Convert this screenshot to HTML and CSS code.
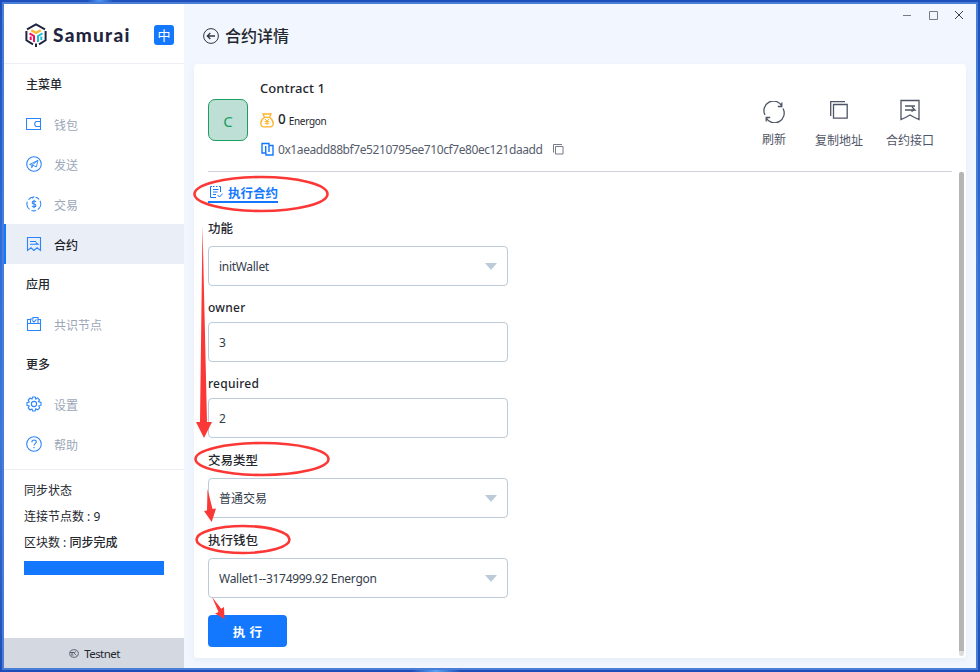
FILE: index.html
```
<!DOCTYPE html>
<html lang="zh-CN">
<head>
<meta charset="utf-8">
<title>Samurai</title>
<link rel="stylesheet" href="styles.css">
</head>
<body>
<div class="window">
  <aside class="sidebar">
    <header class="brand">
      <svg class="brand-mark" width="22" height="24" viewBox="0 0 22 24" fill="none">
        <path d="M2 6.300 11 1.400l9 4.900M1.400 8v9.300l6.600 4M20.600 8v9.300L14 21.300M11 20.500v3.500" stroke="#1f2540" stroke-width="2"/>
        <path d="M6.200 7.200 11 9.800l4.800-2.600" stroke="#fdb833" stroke-width="2.400"/>
        <path d="M4.500 10.300 9 13v6M5.700 13.500V17" stroke="#ee1164" stroke-width="2"/>
        <path d="M17.500 10.300 13 13v6M16.300 13.500V17" stroke="#1cc3d8" stroke-width="2"/>
      </svg>
      <span class="brand-name">Samurai</span>
      <span class="lang">中</span>
    </header>
    <nav class="menu">
      <h2>主菜单</h2>
      <a><svg class="ico" viewBox="0 0 16 16"><path d="M.5 2.500h14v11H.5zM14.500 5.500H10L8.800 7v2L10 10.500h4.500"/></svg>钱包</a>
      <a><svg class="ico" viewBox="0 0 16 16"><circle cx="8" cy="8" r="7.300"/><path d="M3.500 8.500 12 4.300 10.300 11 7.300 9.400zM12 4.300 5.700 9.500v2.300l1.600-2.400" stroke-width=".9"/></svg>发送</a>
      <a><svg class="ico" viewBox="0 0 16 16"><path d="M9.500 1.300a7 7 0 0 1 3.700 2.100M14 4.700a7 7 0 0 1-2.100 8.800M10 14.500a7 7 0 0 1-4.500-.1M3.500 13.300A7 7 0 0 1 1.300 5.700M2.500 3.600A7 7 0 0 1 7.500 1l-1.200 1.400"/><path d="M10 6Q9.500 5 8 5 6.200 5 6.200 6.400T8 8t1.900 1.500T8 11Q6.400 11 6 9.900M8 3.700v8.600"/></svg>交易</a>
      <a class="active"><svg class="ico" viewBox="0 0 16 16"><path d="M1.500 1.500h13v13L11 11.800 8 14.500l-3-2.700-3.500 2.700zM4 5.500h6M4 8.300h8L9.700 6.500"/></svg>合约</a>
      <h2>应用</h2>
      <a><svg class="ico" viewBox="0 0 16 16"><path d="M4 3.500H1.500v11h13v-11H12M1.500 7.500h13M4.500 7V3H7V1.500h5V7M6.300 4.500 8 6l2.500-2.700"/></svg>共识节点</a>
      <h2>更多</h2>
      <a><svg class="ico" viewBox="0 0 16 16"><path d="M6.700 1h2.600l.5 2 1.700-1.100 2 1.900-1 1.800 2.500.8v2.800l-2.300.8 1 1.800-2 2-2-1-.6 2.200H6.700L6 13l-1.900 1-1.900-2 1-1.900L1 9.300V6.600L3.200 6l-1-2 1.900-2L6 3z"/><circle cx="8" cy="8" r="2.600"/></svg>设置</a>
      <a><svg class="ico" viewBox="0 0 16 16"><circle cx="8" cy="8" r="7.300"/><path d="M5.800 6.200C5.900 3.300 10.300 3.400 10.300 6 10.300 7.600 8 7.700 8 9.500M8 11v1.300"/></svg>帮助</a>
    </nav>
    <section class="sync">
      <p>同步状态</p>
      <p>连接节点数 : 9</p>
      <p>区块数 : <b>同步完成</b></p>
      <div class="progress"></div>
    </section>
    <footer class="network">
      <svg width="10" height="9" viewBox="0 0 10 9" fill="none" stroke="#444a58" stroke-width=".8"><ellipse cx="5" cy="4.500" rx="4.300" ry="3.800"/><path d="M1 3.500h3.500M3 5.500v-2h2.500l1.500-1M5 4l2.500 2.500M2 6h2.500"/></svg>
      <span>Testnet</span>
    </footer>
  </aside>
  <main class="main">
    <div class="controls">
      <svg width="62" height="12" viewBox="0 0 62 12" fill="none" stroke="#777b83"><path d="M0 6.500h8M26.500 2.500h8v8h-8z"/><path d="m52 2 8 8m0-8-8 8" stroke="#3c3f46"/></svg>
    </div>
    <header class="title">
      <svg width="16" height="16" viewBox="0 0 16 16" fill="none" stroke="#33363d"><circle cx="8" cy="8" r="7.400"/><path d="M12 8H4.500M7.300 5 4.300 8l3 3" stroke-width="1.300"/></svg>
      <h1>合约详情</h1>
    </header>
    <section class="card">
      <div class="contract">
        <div class="avatar">C</div>
        <div class="info">
          <div class="name">Contract 1</div>
          <div class="balance">
            <svg width="14" height="15" viewBox="0 0 14 15" fill="none" stroke="#fdb32b" stroke-width="1.300"><path d="M3 1h8L9.500 4.300h-5zM4.500 4.300C-.5 8-.3 13.800 4 13.800h6c4.300 0 4.500-5.800-.5-9.500"/><path d="M5 6l2 2 2-2M4.700 8.500h4.600M4.700 10.300h4.600M7 8v4" stroke-width="1"/></svg>
            <b>0</b><small>Energon</small>
          </div>
          <div class="address">
            <svg width="13" height="14" viewBox="0 0 13 14" fill="none" stroke="#1478ff" stroke-width="1.400"><path d="M4.500 11H1V1.500h7V10M5 11v2h7V3.500H8M4.700 4v7"/></svg>
            <span>0x1aeadd88bf7e5210795ee710cf7e80ec121daadd</span>
            <svg class="copy" width="11" height="11" viewBox="0 0 11 11" fill="none" stroke="#777b88"><path d="M2.500 2.500h7.500V10H2.500zM.5 8.500v-8h8.500"/></svg>
          </div>
        </div>
        <div class="actions">
          <a class="refresh"><svg width="22" height="22" viewBox="0 0 22 22"><path d="M19 5.200A9.500 9.500 0 0 0 2 14M3 16.800A9.500 9.500 0 0 0 20 7.500M18.800 1.500v4h-4M3.200 20.500v-4h4"/></svg>刷新</a>
          <a class="copy-address"><svg width="22" height="22" viewBox="0 0 22 22"><path d="M5.500 5.500h13.700v13.700H5.500zM2.700 17V2.700H17"/></svg>复制地址</a>
          <a class="interface"><svg width="22" height="22" viewBox="0 0 22 22"><path d="M2 1.500h18v19l-4.500-2-4.500-2.500-4.500 2.500-4.500 2zM6 7h10M6 11h10l-3-3M12.500 12.500l2.800-1.500"/></svg>合约接口</a>
        </div>
      </div>
      <div class="tabs">
        <a class="tab"><svg width="14" height="14" viewBox="0 0 14 14" fill="none" stroke="#1478ff"><path d="M3 1.500H1.500v11H7M10 1.500h1.500V7M4 1.500h1.500M7 1.500h1.500M4 4.500h5.500M4 7h4.500M4 9.500h3M8.500 10l2 2 3.300-3.500"/></svg><span>执行合约</span></a>
      </div>
      <form class="form">
        <label class="first">功能</label>
        <div class="field select"><span class="init">initWallet</span></div>
        <label class="latin">owner</label>
        <div class="field">3</div>
        <label class="latin">required</label>
        <div class="field">2</div>
        <label>交易类型</label>
        <div class="field select">普通交易</div>
        <label>执行钱包</label>
        <div class="field select"><span class="wallet">Wallet1--3174999.92 Energon</span></div>
        <button type="button">执 行</button>
      </form>
      <div class="scrollbar"></div>
    </section>
  </main>
</div>
<svg class="marks" width="980" height="672" viewBox="0 0 980 672">
  <g fill="none" stroke="#fc3837" stroke-width="2.600">
    <ellipse cx="261" cy="194" rx="66.500" ry="17"/>
    <ellipse cx="262" cy="459" rx="66.500" ry="16"/>
    <ellipse cx="243" cy="539.500" rx="46.500" ry="13.500"/>
  </g>
  <g fill="#fc3837">
    <path d="M202.500 226 L200 422h-4l8 16 8-16h-5z"/>
    <path d="M207.500 489 207 510.500l-3 .5 7.700 11L216 508.500l-3.500.5z"/>
    <path d="M212 597l6.500 15-3.500 1.500 9.500 5.500-.5-12-2.800 1.800z"/>
  </g>
</svg>
</body>
</html>
```

FILE: styles.css
```
* { box-sizing: border-box; }
body {
  margin: 0;
  width: 980px;
  height: 672px;
  padding: 4px;
  overflow: hidden;
  background:
    linear-gradient(100deg, transparent 86px, #4d94f0 98px, transparent 112px) no-repeat 0 0 / 980px 4px,
    linear-gradient(100deg, transparent 405px, #58a5f5 430px, transparent 455px) no-repeat 0 668px / 980px 4px,
    linear-gradient(#1d50bd, #2f6fdc 40%, #3b77dc 65%, #1c4db8);
  font-family: "Noto Sans", "Noto Sans CJK SC", sans-serif;
  font-size: 12px;
  color: #24272e;
}
h1, h2, p { margin: 0; }
svg { display: block; flex: none; }
.window { display: flex; height: 664px; background: #f2f6fe; box-shadow: 0 0 0 2px #4a7dd6; }

.sidebar { display: flex; flex-direction: column; width: 180px; background: #fff; }
.brand { display: flex; align-items: center; height: 60px; padding: 2px 10px 0 21px; border-bottom: 1px solid #ebeef4; }
.brand-name { margin-left: 6px; font: 900 19px/24px "Lato", sans-serif; letter-spacing: 1.3px; color: #1f2540; }
.lang { width: 20px; height: 20px; margin-left: auto; border-radius: 3px; background: #1478ff; color: #fff; font-size: 13px; line-height: 20px; text-align: center; }
.menu { height: 406px; border-bottom: 1px solid #ebeef4; }
.menu h2 { height: 40px; padding-left: 22px; font-size: 12px; font-weight: 500; line-height: 42px; }
.menu a { display: flex; align-items: center; gap: 12px; height: 40px; padding: 1px 0 0 22px; color: #9ba7b9; }
.menu .active { border-left: 2px solid #1478ff; padding-left: 20px; background: #eaeff7; color: #1d2027; font-weight: 500; }
.ico { width: 16px; height: 16px; margin-top: -1px; fill: none; stroke: #2b84ff; stroke-width: 1.100; }
.sync { padding: 8px 20px 0; line-height: 26px; }
.sync b { font-weight: 500; }
.progress { height: 14px; margin-top: 5px; background: #1478ff; }
.network { display: flex; align-items: center; justify-content: center; gap: 5px; height: 30px; margin-top: auto; padding-left: 1px; background: #d4d8e1; }
.network span { font-size: 11.500px; letter-spacing: -.55px; }

.main { flex: 1; display: flex; flex-direction: column; padding: 0 10px 10px; }
.controls { display: flex; justify-content: flex-end; height: 14px; padding: 5px 1px 0 0; }
.title { display: flex; align-items: center; gap: 6px; height: 46px; padding: 0 0 10px 9px; }
.title h1 { font-size: 16px; font-weight: 500; line-height: 24px; }
.card { position: relative; flex: 1; padding: 0 14px; border-radius: 4px; background: #fff; box-shadow: 0 3px 6px #e6edf8; }
.contract { display: flex; height: 108px; border-bottom: 1px solid #cfd1dc; }
.avatar { width: 40px; height: 42px; margin-top: 35px; border: 1px solid #18a05e; border-radius: 7px; background: #bedfd6; color: #18a05e; font-size: 15px; line-height: 43px; text-align: center; }
.info { padding: 14px 0 0 12px; }
.name { font-size: 13px; font-weight: 500; line-height: 20px; letter-spacing: .08px; }
.balance { display: flex; align-items: center; height: 22px; margin-top: 11px; }
.balance b { margin: -2px 3px 0 4px; font-size: 13.500px; font-weight: 500; }
.balance small { padding-top: 2px; font-size: 10px; letter-spacing: -.3px; }
.address { display: flex; align-items: center; height: 20px; margin-top: 8px; padding-left: 1px; color: #575d6d; }
.address span { margin-left: 4px; letter-spacing: -.42px; }
.copy { margin-left: 11px; }
.actions { display: flex; align-items: flex-start; margin-left: auto; padding-right: 18px; color: #4f5566; line-height: 18px; }
.actions a { display: flex; flex-direction: column; align-items: center; }
.actions svg { fill: none; stroke: #4f5566; stroke-width: 1.300; }
.refresh { gap: 8px; margin: 37px 29px 0 0; }
.copy-address { gap: 11px; margin: 35px 23px 0 0; }
.interface { gap: 11px; margin-top: 35px; }
.tabs { display: flex; height: 31px; padding-top: 11px; }
.tab { display: flex; align-items: center; gap: 5px; height: 20px; padding-left: 1px; border-bottom: 2px solid #1478ff; color: #1478ff; font-weight: 700; font-size: 12.500px; line-height: 20px; }
.tab span { padding-top: 3px; }
.form { display: flex; flex-direction: column; width: 300px; }
.form label { height: 40px; font-size: 12.500px; font-weight: 500; line-height: 46px; }
.form .first { height: 43px; line-height: 51px; }
.form .latin { height: 36px; font-weight: 500; font-size: 12px; line-height: 43px; letter-spacing: .25px; }
.field { display: flex; align-items: center; justify-content: space-between; height: 40px; padding: 0 10px; border: 1px solid #bdcad8; border-radius: 4px; background: #fff; color: #333d4c; }
.init { letter-spacing: -.3px; }
.wallet { letter-spacing: -.29px; }
.select::after { content: ""; border: 6px solid transparent; border-top: 7px solid #bdcad8; border-bottom: 0; }
.form button { width: 79px; height: 32px; margin-top: 17px; padding: 0; border: 0; border-radius: 4px; background: #1478ff; color: #fff; font: 700 12.500px "Noto Sans", "Noto Sans CJK SC", sans-serif; word-spacing: 1px; }
.scrollbar { position: absolute; top: 108px; right: 2px; width: 5px; height: 484px; border-radius: 2px; background: linear-gradient(#b5b5b5 479px, #ddd 479px); }
.marks { position: absolute; top: 0; left: 0; pointer-events: none; }
```
